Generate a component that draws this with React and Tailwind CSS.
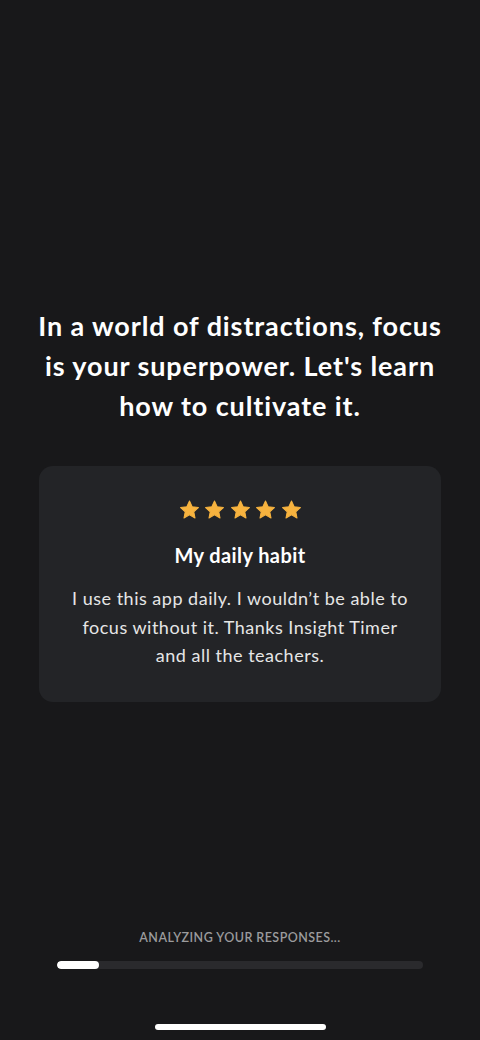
import React from "react";

function Star() {
  return (
    <svg width="21" height="20" viewBox="0 0 24 23" className="block">
      <path
        d="M12 1.2l3.05 6.6 7.2.85-5.33 4.93 1.42 7.12L12 17.1l-6.34 3.6 1.42-7.12L1.75 8.65l7.2-.85z"
        fill="#F7B33F"
        stroke="#F7B33F"
        strokeWidth="1.2"
        strokeLinejoin="round"
      />
    </svg>
  );
}

export default function App() {
  return (
    <div
      className="w-[480px] h-[1040px] bg-[#18181a] flex flex-col items-center text-white"
      style={{ fontFamily: "Lato, 'Open Sans', sans-serif" }}
    >
      <h1 className="mt-[306px] w-[412px] text-center text-[27px] leading-[40px] font-bold tracking-[0.9px]">
        In a world of distractions, focus is your superpower. Let's learn how to cultivate it.
      </h1>

      <div className="mt-[40px] w-[402px] h-[236px] rounded-[14px] bg-[#232427] flex flex-col items-center pt-[34px]">
        <div className="flex gap-[4.5px]">
          <Star />
          <Star />
          <Star />
          <Star />
          <Star />
        </div>
        <div className="mt-[21px] text-[20px] leading-[28px] font-bold tracking-[0.4px]">My daily habit</div>
        <p className="mt-[15px] w-[345px] text-center text-[18px] leading-[28.5px] tracking-[0.5px] text-[#e6e6e6]">
          I use this app daily. I wouldn’t be able to focus without it. Thanks Insight Timer and all the teachers.
        </p>
      </div>

      <div className="flex-1" />

      <div className="text-[12.5px] leading-[16px] tracking-[0.45px] text-[#9b9b9d] font-semibold">
        ANALYZING YOUR RESPONSES...
      </div>
      <div className="mt-[15px] w-[366px] h-[8px] rounded-full bg-[#2a2a2d] overflow-hidden">
        <div className="w-[42px] h-full rounded-full bg-white" />
      </div>

      <div className="mt-[55px] mb-[10px] w-[171px] h-[6px] rounded-full bg-white" />
    </div>
  );
}
